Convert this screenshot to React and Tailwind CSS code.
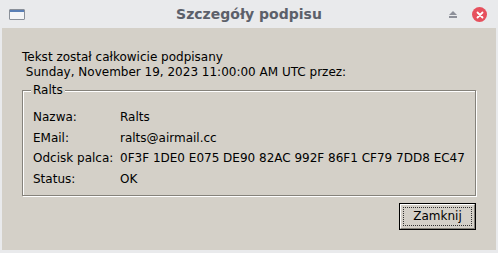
import React from "react";

const rows = [
  { label: "Nazwa:", value: "Ralts" },
  { label: "EMail:", value: "ralts@airmail.cc" },
  { label: "Odcisk palca:", value: "0F3F 1DE0 E075 DE90 82AC 992F 86F1 CF79 7DD8 EC47" },
  { label: "Status:", value: "OK" },
];

export default function App() {
  return (
    <div className="w-[498px] h-[253px] flex flex-col bg-[#e9eaec] text-black overflow-hidden" style={{ fontFamily: '"DejaVu Sans", sans-serif' }}>
      {/* title bar */}
      <div className="relative h-[28px] flex items-center justify-center shrink-0">
        <div className="absolute left-[9px] top-[9px] w-[16px] h-[11px] border border-[#8a9099] bg-[#f4f5f7] rounded-[1px]">
          <div className="h-[2px] bg-[#5a7fb5]" />
        </div>
        <span className="text-[14px] font-bold text-[#5c606a]">Szczegóły podpisu</span>
        <div className="absolute right-[41px] top-[11px] flex flex-col items-center gap-[1px]">
          <div className="w-0 h-0 border-l-[4px] border-r-[4px] border-b-[4px] border-l-transparent border-r-transparent border-b-[#8d9099]" />
          <div className="w-[8px] h-[2px] bg-[#8d9099]" />
        </div>
        <div className="absolute right-[11px] top-[7px] w-[15px] h-[15px] rounded-full bg-[#e6505d] flex items-center justify-center">
          <svg width="8" height="8" viewBox="0 0 8 8">
            <path d="M1.5 1.5 L6.5 6.5 M6.5 1.5 L1.5 6.5" stroke="#fff" strokeWidth="1.8" strokeLinecap="round" />
          </svg>
        </div>
      </div>

      {/* body */}
      <div className="flex-1 mx-[2px] mb-[3px] bg-[#d4d0c8] flex flex-col pl-[20px] pr-[20px] pt-[22px] text-[12px] leading-[15px]">
        <p>Tekst został całkowicie podpisany</p>
        <p className="whitespace-pre"> Sunday, November 19, 2023 11:00:00 AM UTC przez:</p>

        <div className="relative mt-[10px] h-[106px] border border-[#85827b] shadow-[inset_1px_1px_0_#ffffff,1px_1px_0_#ffffff] pt-[16px] pl-[10px]">
          <span className="absolute left-[8px] top-[-8px] px-[2px] bg-[#d4d0c8] leading-[15px]">Ralts</span>
          {rows.map((r) => (
            <div key={r.label} className="flex items-center h-[20.7px]">
              <span className="w-[87px] shrink-0">{r.label}</span>
              <span className="whitespace-nowrap">{r.value}</span>
            </div>
          ))}
        </div>

        <div className="flex justify-end mt-[7px]">
          <button className="w-[77px] h-[27px] border border-black bg-[#d4d0c8] p-0">
            <div className="w-full h-full border-t border-l border-t-white border-l-white border-b border-r border-b-[#85827b] border-r-[#85827b] p-[2px]">
              <div className="w-full h-full border border-dotted border-[#333] flex items-center justify-center text-[12px]">
                Zamknij
              </div>
            </div>
          </button>
        </div>
      </div>
    </div>
  );
}
